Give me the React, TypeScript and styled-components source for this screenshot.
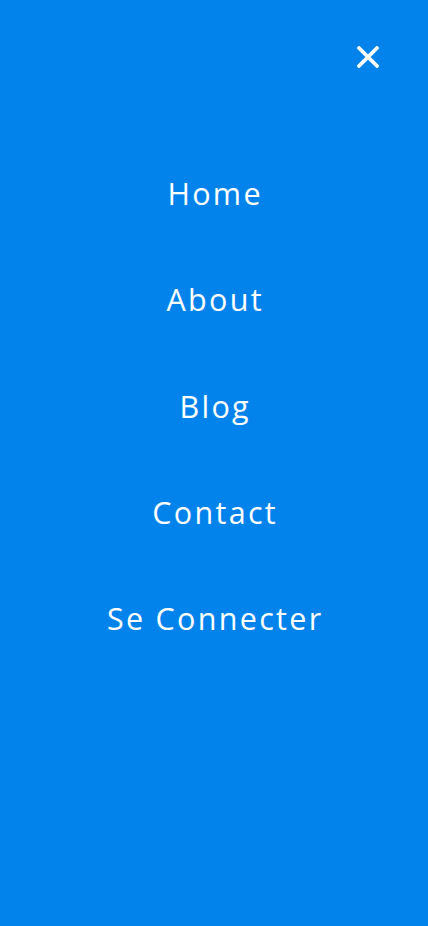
import React from "react";
import styled, { createGlobalStyle } from "styled-components";

const Global = createGlobalStyle`
  html, body { margin: 0; padding: 0; background: #0283ec; }
  body { font-family: "Open Sans", "Noto Sans", sans-serif; }
`;

const Page = styled.div`
  min-height: 926px;
  background: #0283ec;
  display: flex;
  flex-direction: column;
`;

const TopBar = styled.div`
  display: flex;
  justify-content: flex-end;
  padding: 46px 49px 0 0;
`;

const CloseButton = styled.button`
  width: 22px;
  height: 22px;
  padding: 0;
  border: 0;
  background: transparent;
  cursor: pointer;
  display: flex;
`;

const Nav = styled.nav`
  margin-top: 72px;
  display: flex;
  flex-direction: column;
  align-items: center;
`;

const NavLink = styled.a`
  display: block;
  height: 106.25px;
  line-height: 106.25px;
  color: #ffffff;
  font-family: "Open Sans", "Noto Sans", sans-serif;
  font-size: 30.5px;
  font-weight: 400;
  text-decoration: none;
  letter-spacing: 2.3px;
  margin-right: -2.3px;
`;

const items = ["Home", "About", "Blog", "Contact", "Se Connecter"];

export default function App() {
  return (
    <Page>
      <Global />
      <TopBar>
        <CloseButton aria-label="Close">
          <svg width="22" height="22" viewBox="0 0 22 22">
            <path d="M2 2 L20 20 M20 2 L2 20" stroke="#fff" strokeWidth="3.8" strokeLinecap="round" />
          </svg>
        </CloseButton>
      </TopBar>
      <Nav>
        {items.map((t) => (
          <NavLink key={t} href="#">{t}</NavLink>
        ))}
      </Nav>
    </Page>
  );
}
